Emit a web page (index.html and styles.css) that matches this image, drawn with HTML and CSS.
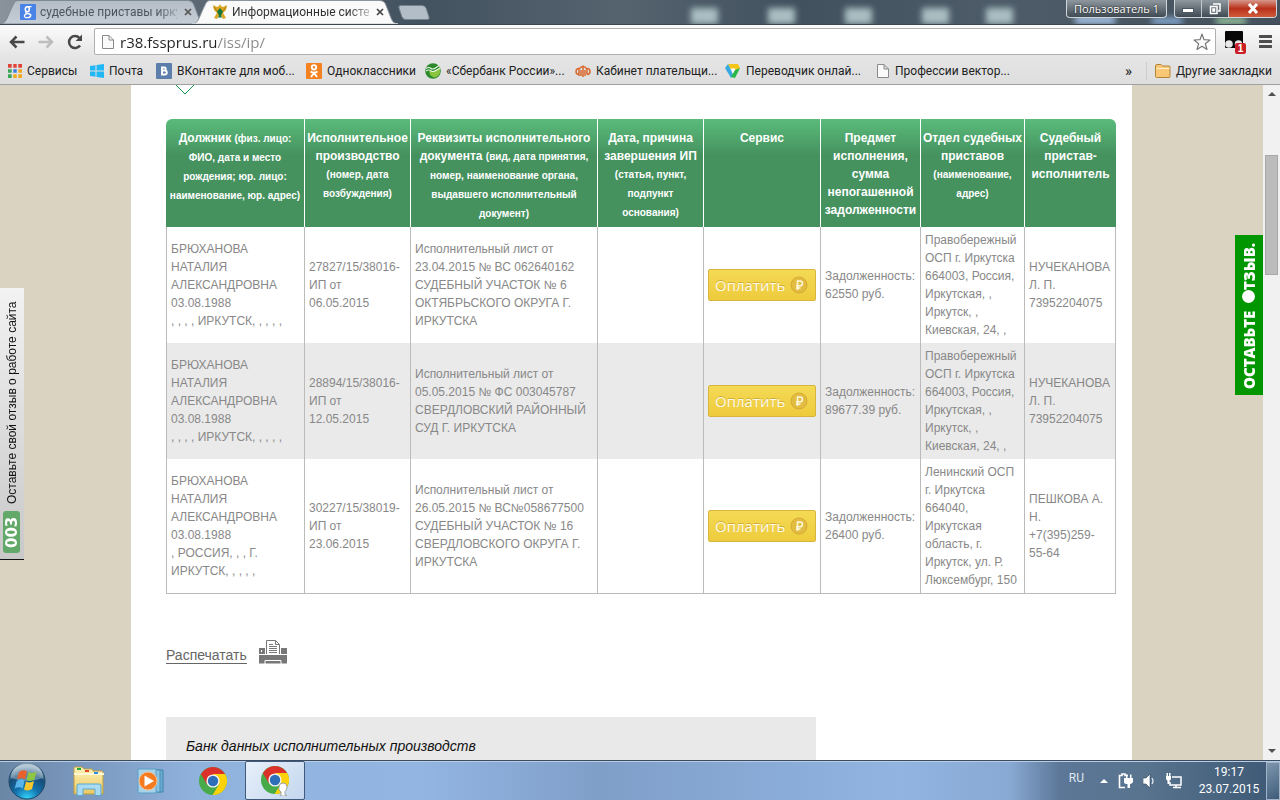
FILE: index.html
```html
<!DOCTYPE html>
<html lang="ru">
<head>
<meta charset="utf-8">
<title>Информационные системы</title>
<link rel="stylesheet" href="styles.css">
</head>
<body>
<svg class="defs" aria-hidden="true">
  <defs>
    <linearGradient id="tabBack" x1="0" x2="0" y1="0" y2="1"><stop offset="0" stop-color="#b4bdc6"/><stop offset="1" stop-color="#c5ced7"/></linearGradient>
    <radialGradient id="orb" cx=".5" cy="1" r=".9"><stop offset="0" stop-color="#35d8ff"/><stop offset=".4" stop-color="#1272ad"/><stop offset=".75" stop-color="#174d78"/><stop offset="1" stop-color="#93afc4"/></radialGradient>
    <linearGradient id="folder" x1="0" x2="0" y1="0" y2="1"><stop offset="0" stop-color="#fff3b8"/><stop offset="1" stop-color="#e9c962"/></linearGradient>
    <symbol id="chrome" viewBox="0 0 28 28">
      <circle cx="14" cy="14" r="14" fill="#47ab49"/>
      <path d="M14 14 1.9 7A14 14 0 0 1 26.1 7z" fill="#dc302b"/>
      <path d="M14 7H26.1A14 14 0 0 1 13.6 28L20 17.5z" fill="#fdd20a"/>
      <path d="M1.9 7 8 17.5 14 7z" fill="#dc302b"/>
      <circle cx="14" cy="14" r="6.6" fill="#f4f4f4"/>
      <circle cx="14" cy="14" r="5.2" fill="#2e6db8"/>
    </symbol>
    <symbol id="page" viewBox="0 0 12 14"><path d="M.5.5h6.5l4.5 4.500V13.500H.5zM7 .5v4.500h4.500" fill="#fafafa" stroke="#8a8a8a"/></symbol>
    <symbol id="ruble" viewBox="0 0 18 18">
      <circle cx="9" cy="9" r="8" fill="#e3bc42" stroke="#d5ab34"/>
      <path d="M7.500 14V5h2.500a2.300 2.300 0 0 1 0 4.800H6M6 12h4.500" fill="none" stroke="#fff9df" stroke-width="1.500"/>
    </symbol>
  </defs>
</svg>

<header class="browser">
  <div class="titlebar">
    <i class="blob b1"></i><i class="blob b2"></i><i class="blob b3"></i><i class="blob b4"></i><i class="blob b5"></i><i class="blob b6"></i><i class="blob b7"></i><i class="blob b8"></i>
    <nav class="tabs">
      <div class="tab">
        <svg class="tab-shape" viewBox="0 0 206 24" preserveAspectRatio="none"><path d="M0 24C7 23 6 19 14 3Q15 .5 18 .5H188Q191 .5 193 3C200 19 199 23 206 24z" fill="url(#tabBack)" stroke="#7c8a96"/></svg>
        <svg width="16" height="16" viewBox="0 0 16 16"><rect width="16" height="16" rx="1" fill="#4a83e8"/><g fill="none" stroke="#fff"><ellipse cx="7.300" cy="5.200" rx="2" ry="2.500" stroke-width="1.500"/><path d="M11.500 2.600H8M6.300 7.800Q4.800 9.200 7.500 9.500 11 9.900 10.800 11.700 10.500 13.700 7.300 13.700 4.300 13.600 4.400 11.900 4.600 10.300 7 9.700" stroke-width="1.300"/></g></svg>
        <a class="tab-title" href="#">судебные приставы ирку</a>
        <button class="close" aria-label="Закрыть вкладку"><svg width="8" height="8" viewBox="0 0 8 8"><path d="M1 1l6 6M7 1 1 7" stroke="#555" stroke-width="1.700"/></svg></button>
      </div>
      <div class="tab active">
        <svg class="tab-shape" viewBox="0 0 206 24" preserveAspectRatio="none"><path d="M0 24C7 23 6 19 14 3Q15 .5 18 .5H188Q191 .5 193 3C200 19 199 23 206 24z" fill="#fafafa" stroke="#8c959c"/><path d="M0 24H206" stroke="#fafafa"/></svg>
        <svg width="16" height="16" viewBox="0 0 16 16"><path d="M1 1l4 2 2-1 1-2 1 2 2 1 4-2-1 5-3 3 3 5-3 1-3-5-3 5-3-1 3-5-3-3z" fill="#dba723"/><path d="M8 4l3 3.500-2 4 1 2H6l1-2-2-4z" fill="#16783a"/><path d="M2 3l3 4M14 3l-3 4" stroke="#b57a13"/></svg>
        <a class="tab-title" href="#">Информационные систе</a>
        <button class="close" aria-label="Закрыть вкладку"><svg width="8" height="8" viewBox="0 0 8 8"><path d="M1 1l6 6M7 1 1 7" stroke="#444" stroke-width="1.700"/></svg></button>
      </div>
      <button class="new-tab" aria-label="Новая вкладка"><svg width="32" height="15" viewBox="0 0 32 15"><path d="M3 .5H24Q27 .5 28 3L31 12Q32 14.500 29 14.500H8Q5 14.500 4 12L1 3Q0 .5 3 .5z" fill="#b2bdc7" stroke="#74828e"/></svg></button>
    </nav>
    <div class="window-tools">
      <button class="user">Пользователь 1</button>
      <div class="controls">
        <button aria-label="Свернуть"><svg width="12" height="12" viewBox="0 0 12 12"><rect x=".5" y="5.500" width="11" height="4" fill="#fff" stroke="#4c565e"/></svg></button>
        <button aria-label="Восстановить"><svg width="12" height="12" viewBox="0 0 12 12"><path d="M4 1h7v7H9M1.500 3.500h6.500v7H1.500zM4 6h1.500v2H4z" fill="none" stroke="#fff" stroke-width="1.500"/></svg></button>
        <button class="x" aria-label="Закрыть"><svg width="12" height="11" viewBox="0 0 12 11"><path d="M2 1l8 9M10 1 2 10" stroke="#fff" stroke-width="3"/></svg></button>
      </div>
    </div>
  </div>

  <div class="toolbar">
    <button class="nav" aria-label="Назад"><svg width="16" height="14" viewBox="0 0 16 14"><path d="M7.500 1.500 2 7l5.500 5.500M2 7h13.500" fill="none" stroke="#484848" stroke-width="2.500"/></svg></button>
    <button class="nav" aria-label="Вперед"><svg width="16" height="14" viewBox="0 0 16 14"><path d="M8.500 1.500 14 7l-5.500 5.500M14 7H.5" fill="none" stroke="#bdbdbd" stroke-width="2.500"/></svg></button>
    <button class="nav reload" aria-label="Обновить"><svg width="16" height="16" viewBox="0 0 16 16"><path d="M13 11.500A6 6 0 1 1 12.500 4" fill="none" stroke="#484848" stroke-width="2.500"/><path d="M15 .5V7H8.500z" fill="#484848"/></svg></button>
    <div class="omnibox">
      <svg width="12" height="14"><use href="#page"/></svg>
      <input class="url" type="text" value="r38.fssprus.ru/iss/ip/" aria-label="Адрес">
      <button class="nav" aria-label="В закладки"><svg width="18" height="18" viewBox="0 0 18 18"><path d="M9 1l2 5.700 6 .3-4.700 3.700L14 16.500 9 13.300l-5 3.200 1.700-5.800L1 7l6-.3z" fill="#fff" stroke="#777" stroke-width="1.200" stroke-linejoin="round"/></svg></button>
    </div>
    <button class="ext" aria-label="Расширение, 1"><svg width="24" height="24" viewBox="0 0 24 24"><rect x="1" y="1" width="18" height="17" rx="1" fill="#080808"/><circle cx="5" cy="14" r="3.800" fill="#e8e8e8"/><circle cx="14.500" cy="14" r="3.800" fill="#e8e8e8"/></svg><span class="badge">1</span></button>
    <button class="nav menu" aria-label="Меню"><svg width="13" height="13" viewBox="0 0 13 13"><path d="M1 1.500h11M1 6.500h11M1 11.500h11" stroke="#4d4d4d" stroke-width="3" stroke-linecap="round"/></svg></button>
  </div>

  <nav class="bookmarks">
    <a href="#"><svg width="14" height="14" viewBox="0 0 14 14"><path d="M0 0h4v4H0zM5 0h4v4H5zM10 0h4v4h-4z" fill="#e0433a"/><path d="M0 5h4v4H0z" fill="#3ba55a"/><path d="M5 5h4v4H5z" fill="#3c7ce0"/><path d="M10 5h4v4h-4zM5 10h4v4H5zM10 10h4v4h-4z" fill="#f0a91c"/><path d="M0 10h4v4H0z" fill="#3ba55a"/><path d="M4.500 0v14M9.500 0v14M0 4.500h14M0 9.500h14" stroke="#e2e2e2" stroke-width="1.600"/></svg>Сервисы</a>
    <a href="#"><svg width="14" height="14" viewBox="0 0 14 14"><path d="M0 2l5.500-.8v5.300H0zM6.500 1 14 0v6.500H6.500zM0 7.500h5.500v5.300L0 12zM6.500 7.500H14V14l-7.500-1z" fill="#22b8f5"/></svg>Почта</a>
    <a href="#"><svg width="16" height="16" viewBox="0 0 16 16"><rect width="16" height="16" rx="1" fill="#5b7faa"/><path d="M6 4.500h2.300a1.500 1.500 0 0 1 0 3H6zm0 3h2.800a1.900 1.900 0 0 1 0 4H6z" fill="none" stroke="#fff" stroke-width="1.900"/></svg>ВКонтакте для моб...</a>
    <a href="#"><svg width="16" height="16" viewBox="0 0 16 16"><rect width="16" height="16" rx="1" fill="#f58220"/><g fill="none" stroke="#fff" stroke-width="1.900"><circle cx="8" cy="4.300" r="2.200"/><path d="M4.500 8.500q3.500 2.300 7 0M8 9.800 5 14M8 9.800 11 14"/></g></svg>Одноклассники</a>
    <a href="#"><svg width="16" height="16" viewBox="0 0 16 16"><circle cx="8" cy="8" r="7.800" fill="#2c8a2c"/><path d="M4 8q4 2 11-3 1 8-5 9.500Q5 14 4 8z" fill="#8bc53f"/><path d="M1 5.500q3-2 5 0t8-3M1 8q3-2 5 0t9-3" fill="none" stroke="#e9f6e4" stroke-width="1.100"/></svg>«Сбербанк России»...</a>
    <a href="#"><svg width="16" height="16" viewBox="0 0 16 16"><g fill="none" stroke="#d9682f" stroke-width="1.500"><path d="M4 5.500Q1 5.500 1 8.500t3 3M4 5v8M8 2.500V14M12 5v6.500M12 5.500q3 0 3 3t-3 3M4 6q2-2.500 4-2.500T12 6M6 7v6M10 7v6"/></g></svg>Кабинет плательщи...</a>
    <a href="#"><svg width="16" height="16" viewBox="0 0 16 16"><path d="M3 1h10l2 4-4 2H6z" fill="#f5c518"/><path d="M0 5l3-4 3 6 2 5-2 3z" fill="#38a8e0"/><path d="M15 5l-5 10-4-1 4-7z" fill="#28b84a"/><path d="M5.500 5.500h5L8 10z" fill="#fff"/></svg>Переводчик онлай...</a>
    <a href="#"><svg width="14" height="14" viewBox="-1 0 14 14"><use href="#page" width="12" height="14"/></svg>Профессии вектор...</a>
    <button class="more" aria-label="Другие">»</button>
    <a class="others" href="#"><svg width="16" height="14" viewBox="0 0 16 14"><path d="M.5 12.500V2Q.5.5 2 .5h4L7.500 2H14q1 0 1 1v9.500q0 1-1 1H1.500q-1 0-1-1z" fill="#f8c877" stroke="#b58338"/><path d="M1.500 4.500h13" stroke="#fff0cc"/></svg>Другие закладки</a>
  </nav>
</header>

<div class="viewport">
  <div class="scroller">
    <main class="site">
      <svg class="chevron" width="18" height="10" viewBox="0 0 18 10"><path d="M0 0 9 9 18 0" fill="none" stroke="#129a50" stroke-width="1"/></svg>
      <table class="results">
        <colgroup><col class="c1"><col class="c2"><col class="c3"><col class="c4"><col class="c5"><col class="c6"><col class="c7"><col class="c8"></colgroup>
        <thead>
          <tr>
            <th>Должник <small>(физ. лицо:<br>ФИО, дата и место<br>рождения; юр. лицо:<br>наименование, юр. адрес)</small></th>
            <th>Исполнительное<br>производство<br><small>(номер, дата<br>возбуждения)</small></th>
            <th>Реквизиты исполнительного<br>документа <small>(вид, дата принятия,<br>номер, наименование органа,<br>выдавшего исполнительный<br>документ)</small></th>
            <th>Дата, причина<br>завершения ИП<br><small>(статья, пункт,<br>подпункт<br>основания)</small></th>
            <th>Сервис</th>
            <th>Предмет исполнения, сумма непогашенной задолженности</th>
            <th>Отдел судебных<br>приставов<br><small>(наименование,<br>адрес)</small></th>
            <th>Судебный<br>пристав-<br>исполнитель</th>
          </tr>
        </thead>
        <tbody>
          <tr>
            <td>БРЮХАНОВА НАТАЛИЯ АЛЕКСАНДРОВНА 03.08.1988<br>, , , , ИРКУТСК, , , , ,</td>
            <td>27827/15/38016-<br>ИП от<br>06.05.2015</td>
            <td>Исполнительный лист от<br>23.04.2015 № ВС 062640162<br>СУДЕБНЫЙ УЧАСТОК № 6<br>ОКТЯБРЬСКОГО ОКРУГА Г.<br>ИРКУТСКА</td>
            <td></td>
            <td><button class="pay">Оплатить<svg width="18" height="18"><use href="#ruble"/></svg></button></td>
            <td>Задолженность:<br>62550 руб.</td>
            <td>Правобережный<br>ОСП г. Иркутска<br>664003, Россия,<br>Иркутская, ,<br>Иркутск, ,<br>Киевская, 24, ,</td>
            <td>НУЧЕКАНОВА<br>Л. П.<br>73952204075</td>
          </tr>
          <tr>
            <td>БРЮХАНОВА НАТАЛИЯ АЛЕКСАНДРОВНА 03.08.1988<br>, , , , ИРКУТСК, , , , ,</td>
            <td>28894/15/38016-<br>ИП от<br>12.05.2015</td>
            <td>Исполнительный лист от<br>05.05.2015 № ФС 003045787<br>СВЕРДЛОВСКИЙ РАЙОННЫЙ<br>СУД Г. ИРКУТСКА</td>
            <td></td>
            <td><button class="pay">Оплатить<svg width="18" height="18"><use href="#ruble"/></svg></button></td>
            <td>Задолженность:<br>89677.39 руб.</td>
            <td>Правобережный<br>ОСП г. Иркутска<br>664003, Россия,<br>Иркутская, ,<br>Иркутск, ,<br>Киевская, 24, ,</td>
            <td>НУЧЕКАНОВА<br>Л. П.<br>73952204075</td>
          </tr>
          <tr>
            <td>БРЮХАНОВА НАТАЛИЯ АЛЕКСАНДРОВНА 03.08.1988<br>, РОССИЯ, , , Г.<br>ИРКУТСК, , , , ,</td>
            <td>30227/15/38019-<br>ИП от<br>23.06.2015</td>
            <td>Исполнительный лист от<br>26.05.2015 № ВС№058677500<br>СУДЕБНЫЙ УЧАСТОК № 16<br>СВЕРДЛОВСКОГО ОКРУГА Г.<br>ИРКУТСКА</td>
            <td></td>
            <td><button class="pay">Оплатить<svg width="18" height="18"><use href="#ruble"/></svg></button></td>
            <td>Задолженность:<br>26400 руб.</td>
            <td>Ленинский ОСП<br>г. Иркутска<br>664040,<br>Иркутская<br>область, г.<br>Иркутск, ул. Р.<br>Люксембург, 150</td>
            <td>ПЕШКОВА А.<br>Н.<br>+7(395)259-<br>55-64</td>
          </tr>
        </tbody>
      </table>
      <div class="print">
        <a href="#">Распечатать</a>
        <svg width="28" height="24" viewBox="0 0 28 24"><path d="M0 8h6v6h16V8h6v15.500H0z" fill="#777"/><path d="M7.500 14V.5h9l4 4V14M16.500.5v4h4" fill="#fff" stroke="#777"/><path d="M10 4.500h4M10 6.500h8M10 8.500h8M10 10.500h8M10 12.500h8" stroke="#777"/><path d="M0 14.500h28M6 24v-3.500h16V24" fill="none" stroke="#fff"/><path d="M2 10h1v2H2z" fill="#fff"/></svg>
      </div>
      <section class="note"><h2>Банк данных исполнительных производств</h2></section>
    </main>
    <a class="feedback-left" href="#"><span class="count">003</span><span>Оставьте свой отзыв о работе сайта</span></a>
    <a class="feedback-right" href="#"><span>ОСТАВЬТЕ</span><i class="dot"></i><span>ТЗЫВ.</span></a>
  </div>
  <div class="scrollbar">
    <svg width="8" height="4" viewBox="0 0 8 4"><path d="M0 4 4 0l4 4z" fill="#505050"/></svg>
    <div class="track"><div class="thumb"></div></div>
    <svg width="8" height="4" viewBox="0 0 8 4"><path d="M0 0 4 4 8 0z" fill="#505050"/></svg>
  </div>
</div>

<footer class="taskbar">
  <button class="start" aria-label="Пуск"><svg width="38" height="38" viewBox="0 0 38 38"><circle cx="19" cy="19" r="18" fill="url(#orb)" stroke="#1c4666"/><path d="M3 16A16 16 0 0 1 35 16Q19 22 3 16z" fill="#fff" opacity=".3"/><path d="M11 10q4-3 8-.5l-2 8q-4-2.500-8 0z" fill="#e8602c"/><path d="M20.500 10q4 2 8-.5l-2 8q-4 2.500-8 .5z" fill="#8ec641"/><path d="M8.700 19q4-3 8-.5l-2 8q-4-2.500-8 0z" fill="#58b4ea"/><path d="M18 19.500q4 2 8-.5l-2 8q-4 2.500-8 .5z" fill="#fbc72f"/></svg></button>
  <button class="task" aria-label="Проводник"><svg width="32" height="30" viewBox="0 0 32 30"><path d="M1 28V2q0-1 1-1h7l2 2h8l1 2h9q1 0 1 2v21z" fill="url(#folder)" stroke="#bd9f45"/><path d="M1 8h30" stroke="#fff9d8" stroke-width="2"/><path d="M4 2h4v2H4z" fill="#25a83c"/><path d="M12 4h4v2h-4z" fill="#e2472a"/><path d="M21 6h4v2h-4z" fill="#2b8de0"/><path d="M4 29.500V20q0-2 2-2h20q2 0 2 2v9.500h-6V23H10v6.500z" fill="#a9dcf2" stroke="#5ba7cf"/></svg></button>
  <button class="task" aria-label="Проигрыватель"><svg width="28" height="26" viewBox="0 0 28 26"><path d="M8 2h18v22H8z" fill="#6cabd0" stroke="#3c83ad"/><path d="M5 2h18v22H5z" fill="#8cc3e0" stroke="#4a90ba"/><path d="M1 1h18v24H1z" fill="#a8d4ea" stroke="#5b9ec4"/><circle cx="11" cy="13" r="9" fill="#f47b20" stroke="#f9c294"/><path d="M7.500 7.500 17 13l-9.500 5.500z" fill="#fff"/></svg></button>
  <button class="task" aria-label="Chrome"><svg width="28" height="28"><use href="#chrome"/></svg></button>
  <button class="task current" aria-label="Chrome, Пользователь 1"><svg width="28" height="30" viewBox="0 0 28 30"><use href="#chrome" width="28" height="28"/><path d="M18 21q0-4 4-4t4 4q0 3-2 4.500v3l2 1.500h-7l1-1.500V26l-2-2z" fill="#fff" stroke="#7b8388" stroke-width=".7"/></svg></button>
  <div class="tray">
    <span class="lang">RU</span>
    <svg width="8" height="4" viewBox="0 0 8 4"><path d="M0 4 4 0l4 4z" fill="#fff"/></svg>
    <svg width="15" height="16" viewBox="0 0 15 16"><path d="M7 14.500H1.500v-12H4V1h3v1.500h3" fill="none" stroke="#fff" stroke-width="1.600"/><path d="M6 5h9v4q-1 2-3 2v4H9.500v-4Q6 11 6 9zM8 1.500h1.500V5H8zM12 1.500h1.500V5H12z" fill="#fff"/></svg>
    <svg width="13" height="16" viewBox="0 0 13 16"><path d="M0 5h3l4-4v14l-4-4H0z" fill="#fff" stroke="#33465e" stroke-width=".6"/><path d="M9 5q2 3 0 6" fill="none" stroke="#dce6f0" stroke-width="1.300"/></svg>
    <svg width="16" height="16" viewBox="0 0 16 16"><path d="M6 4h9v8H4V9M7 14.500h8M10 12v2" fill="none" stroke="#fff" stroke-width="1.500"/><path d="M0 3h5v3L3.500 8V11h-2V8L0 6zM.5 0H2v3H.5zM3 0h1.500v3H3z" fill="#fff"/></svg>
    <time class="clock"><span>19:17</span><span>23.07.2015</span></time>
  </div>
  <button class="desktop" aria-label="Показать рабочий стол"></button>
</footer>
</body>
</html>
```
FILE: styles.css
```css
* { box-sizing: border-box; }
body {
  margin: 0;
  height: 100vh;
  display: flex;
  flex-direction: column;
  overflow: hidden;
  font-family: "Liberation Sans", Arial, sans-serif;
  font-size: 12px;
}
button { margin: 0; padding: 0; border: 0; background: none; font: inherit; color: inherit; }
svg { display: block; flex: none; }
a { color: inherit; text-decoration: none; }
.defs { position: absolute; width: 0; height: 0; }

/* Browser window */
.browser {
  flex: none;
  font-family: Roboto, "Open Sans", sans-serif;
  color: #222;
  background: linear-gradient(#fbfbfb 25px, #e4e4e4 58px, #dedede);
  border-bottom: 1px solid #a0a0a0;
}
.titlebar {
  position: relative;
  height: 25px;
  display: flex;
  justify-content: space-between;
  overflow: hidden;
  background: linear-gradient(90deg, #8a929b, #5b6873 200px, #43525f 420px, #55636f 620px, #42515e 800px, #4d5c68 1000px, #45525e);
  border-bottom: 1px solid #3c4751;
}
.blob { position: absolute; bottom: 0; width: 27px; height: 16px; background: #a9bfc2; filter: blur(3px); }
.b1 { left: 54%; } .b2 { left: 60%; } .b3 { left: 66%; } .b4 { left: 72%; } .b5 { left: 77%; }
.b6 { left: 84%; width: 40px; height: 8px; background: #a8c5e8; }
.b7 { left: 90%; width: 30px; height: 6px; background: #8fb5e2; }
.b8 { left: 95%; width: 30px; height: 6px; background: #9fd0a5; }
.tabs { position: relative; display: flex; align-items: flex-end; }
.tab {
  position: relative;
  width: 206px;
  height: 24px;
  display: flex;
  align-items: center;
  gap: 4px;
  padding: 0 11px 0 20px;
  color: #4d5660;
}
.tab.active { margin-left: -14px; color: #333; z-index: 1; }
.tab-shape { position: absolute; left: 0; top: 0; width: 100%; height: 100%; }
.tab > :not(.tab-shape) { position: relative; }
.tab-title {
  flex: 1;
  min-width: 0;
  white-space: nowrap;
  mask-image: linear-gradient(90deg, #000 85%, rgba(0, 0, 0, .3));
}
.close { width: 14px; display: flex; justify-content: center; }
.new-tab { align-self: center; }
.window-tools { position: relative; display: flex; align-items: flex-start; gap: 7px; padding-right: 3px; color: #fff; }
.user, .controls {
  height: 18px;
  border: 1px solid #d0d6db;
  border-top: 0;
  border-radius: 0 0 4px 4px;
  background: linear-gradient(#8f989f, #3f4a53);
  overflow: hidden;
}
.user { padding: 0 7px; line-height: 17px; font-family: "Open Sans", sans-serif; font-size: 11px; text-shadow: 0 0 2px #000; }
.controls { display: flex; }
.controls button { width: 27px; display: flex; align-items: center; justify-content: center; border-right: 1px solid #c2c9ce; }
.controls .x { width: 47px; border: 0; background: linear-gradient(#d8988c, #b9311a 50%, #d05c3a); }

.toolbar { display: flex; align-items: center; height: 33px; padding: 0 8px 0 9px; }
.nav { display: flex; margin-right: 13px; }
.reload { margin-right: 11px; }
.omnibox {
  flex: 1;
  display: flex;
  align-items: center;
  gap: 6px;
  height: 27px;
  padding: 0 4px 0 7px;
  background: #fff;
  border: 1px solid #b0b0b0;
  border-radius: 2px;
}
.omnibox .nav { margin: 0; }
.url {
  flex: 1;
  min-width: 0;
  border: 0;
  padding: 0;
  outline: 0;
  font: 15px/22px "Open Sans", "Noto Sans", sans-serif;
  color: #222;
  background: linear-gradient(90deg, #222 96px, #888 96px);
  -webkit-background-clip: text;
  background-clip: text;
  -webkit-text-fill-color: transparent;
}
.ext { position: relative; margin: 0 11px 0 8px; }
.badge {
  position: absolute;
  right: 2px;
  bottom: 0;
  width: 11px;
  height: 11px;
  border-radius: 2px;
  background: #c91f26;
  color: #fff;
  font: bold 10px/11px "Liberation Sans", sans-serif;
}
.menu { margin: 0; }

.bookmarks {
  display: grid;
  grid-template-columns: 82px 66px 150px 119px 150px 150px 151px minmax(0, 1fr) auto auto;
  align-items: center;
  height: 26px;
  padding: 0 8px;
  line-height: 18px;
}
.bookmarks a { display: flex; align-items: center; gap: 5px; white-space: nowrap; }
.more { padding: 0 14px 0 0; font-size: 15px; line-height: 18px; }
.bookmarks .others { padding-left: 8px; border-left: 1px solid #c8cdd2; }

/* Page */
.viewport { flex: 1; min-height: 0; display: flex; }
.scroller { position: relative; flex: 1; min-width: 0; overflow: hidden; background: #dad3c1; }
.site { max-width: 1001px; min-height: 100%; margin: 0 auto; padding: 0 16px 0 35px; background: #fff; }
.chevron { margin: 0 0 24px 10px; }
.results { width: 100%; table-layout: fixed; border-spacing: 0; line-height: 18px; }
.c1 { width: 138px; } .c2 { width: 106px; } .c3 { width: 187px; } .c4 { width: 106px; }
.c5 { width: 117px; } .c6 { width: 100px; } .c7 { width: 104px; } .c8 { width: 92px; }
.results th {
  height: 108px;
  padding: 10px 0 0;
  vertical-align: top;
  color: #fff;
  background: linear-gradient(#5abb7b, #45925f 36px);
  border-left: 1px solid #fff;
}
.results th:first-child { border-left: 0; border-top-left-radius: 6px; }
.results th:last-child { border-top-right-radius: 6px; }
.results small { font-size: 10px; line-height: 19px; }
.results td { padding: 4px 0 4px 4px; color: #888; border-left: 1px solid #bbb; vertical-align: middle; }
.results td:first-child { padding-right: 20px; }
.results td:last-child { border-right: 1px solid #bbb; }
.results tbody tr:nth-child(even) { background: #eaeaea; }
.results tbody tr:last-child td { border-bottom: 1px solid #bbb; }
.pay {
  display: flex;
  align-items: center;
  justify-content: space-between;
  width: 108px;
  height: 32px;
  padding: 0 7px 0 6px;
  border: 1px solid #d8b53d;
  border-radius: 2px;
  background: linear-gradient(#f4da55, #eecb3c);
  color: #fffbea;
  font: 15px/20px "Open Sans", "Noto Sans", sans-serif;
  text-shadow: 0 -1px 0 #d3ad33;
}
.print { display: flex; align-items: center; gap: 12px; margin: 46px 0 53px; font-size: 14px; color: #666; }
.print a { line-height: 16px; border-bottom: 1px solid #666; margin-top: 7px; }
.note { width: 650px; max-width: 100%; padding: 20px; background: #e9e9e9; }
.note h2 { margin: 0; font: italic 14px/18px "Liberation Sans", Arial, sans-serif; color: #111; }

.feedback-left, .feedback-right {
  position: absolute;
  display: flex;
  align-items: center;
  writing-mode: vertical-rl;
  transform: rotate(180deg);
  white-space: nowrap;
}
.feedback-left {
  left: 0;
  top: 203px;
  width: 24px;
  height: 272px;
  gap: 7px;
  padding-top: 6px;
  color: #111;
  background: linear-gradient(#c8c8c8, #f2f2f2);
  border-top: 1px solid #111;
}
.count {
  width: 17px;
  height: 42px;
  line-height: 17px;
  text-align: center;
  border-radius: 3px;
  background: #62a868;
  color: #fff;
  font-family: "DejaVu Sans", sans-serif;
  font-size: 15px;
  font-weight: bold;
}
.feedback-right {
  right: 0;
  top: 150px;
  width: 28px;
  height: 160px;
  padding: 6px 0;
  background: #009600;
  color: #fff;
  font: 800 15px/28px "Open Sans", sans-serif;
}
.dot { width: 13px; height: 13px; margin-top: 8px; border-radius: 50%; background: #fff; }

.scrollbar { flex: none; width: 17px; display: flex; flex-direction: column; align-items: center; padding: 7px 0; background: #f1f1f1; }
.track { flex: 1; align-self: stretch; padding: 59px 2px 0; }
.thumb { height: 120px; background: #bcbcbc; border: 1px solid #a8a8a8; }

/* Taskbar */
.taskbar {
  flex: none;
  height: 40px;
  display: flex;
  align-items: center;
  background: linear-gradient(90deg, #6b87a6, #7d9cc3 100px, #90b3de 200px, #93b5e2 420px, #7f9fc9 600px, #91b4e1 900px, #88a9d3 1010px, #5c7797 1060px, #58748f 1140px, #3d5874);
  border-top: 1px solid #3c4c60;
  box-shadow: inset 0 1px #b9cde4;
  color: #fff;
  font-family: Roboto, "Open Sans", sans-serif;
}
.start { margin: 0 0 0 8px; }
.task { width: 60px; height: 39px; display: flex; align-items: center; justify-content: center; margin-left: 2px; }
.start + .task { margin-left: 13px; }
.current { border: 1px solid #3f5a7c; border-radius: 2px; background: linear-gradient(135deg, #e8f0fa, #c3d6ee); }
.tray { margin-left: auto; display: flex; align-items: center; gap: 10px; }
.lang { margin-right: 6px; color: #dfe7ef; line-height: 16px; padding-bottom: 5px; }
.clock { width: 74px; display: flex; flex-direction: column; align-items: center; line-height: 17px; }
.desktop { width: 14px; height: 38px; border: 1px solid #a2b5c8; background: linear-gradient(150deg, #7d96ae, #3f5c78); }
```
